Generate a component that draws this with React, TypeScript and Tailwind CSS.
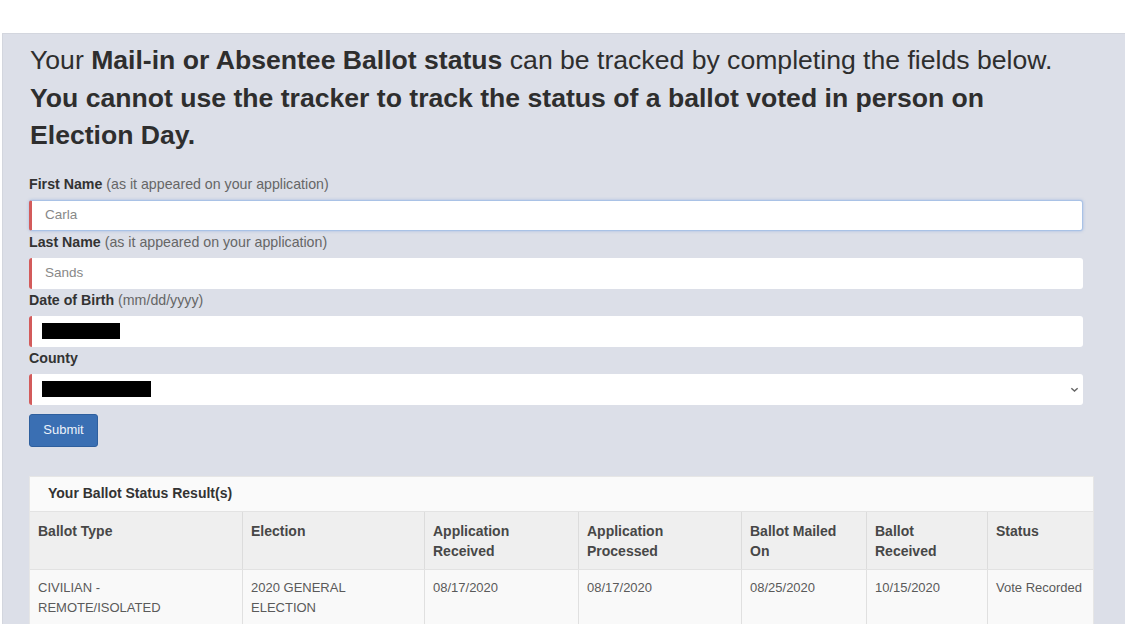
import React from 'react';

const font = { fontFamily: '"Liberation Sans", Arial, sans-serif' };

interface Field {
  label: string;
  hint?: string;
  value?: string;
  redact?: number;
  focus?: boolean;
  select?: boolean;
}

const fields: Field[] = [
  { label: 'First Name', hint: '(as it appeared on your application)', value: 'Carla', focus: true },
  { label: 'Last Name', hint: '(as it appeared on your application)', value: 'Sands' },
  { label: 'Date of Birth', hint: '(mm/dd/yyyy)', redact: 78 },
  { label: 'County', redact: 109, select: true },
];

const columns = [
  { title: ['Ballot Type'], value: ['CIVILIAN -', 'REMOTE/ISOLATED'], w: 'w-[212px]' },
  { title: ['Election'], value: ['2020 GENERAL', 'ELECTION'], w: 'w-[182px]' },
  { title: ['Application', 'Received'], value: ['08/17/2020'], w: 'w-[154px]' },
  { title: ['Application', 'Processed'], value: ['08/17/2020'], w: 'w-[163px]' },
  { title: ['Ballot Mailed', 'On'], value: ['08/25/2020'], w: 'w-[125px]' },
  { title: ['Ballot', 'Received'], value: ['10/15/2020'], w: 'w-[121px]' },
  { title: ['Status'], value: ['Vote Recorded'], w: 'flex-1' },
];

export default function App() {
  return (
    <div className="w-[1125px] h-[624px] overflow-hidden bg-white pt-[33px]" style={font}>
      <div className="h-full ml-[2px] bg-[#dcdfe8] border-t border-l border-[#d3d6de] pl-[26px] pr-[40px] pt-[8px]">
        {/* Intro */}
        <div className="ml-[1px] w-[1040px] text-[26.6px] leading-[37.5px] text-[#2e2e2e]">
          <p>
            Your <b>Mail-in or Absentee Ballot status</b> can be tracked by completing the fields below.
          </p>
          <p className="font-bold">
            You cannot use the tracker to track the status of a ballot voted in person on Election Day.
          </p>
        </div>

        {/* Form */}
        <div className="mt-[18px] w-[1054px]">
          {fields.map((f) => (
            <div key={f.label}>
              <div className="pt-[3px] pb-[8px] text-[14.2px] leading-[16px]">
                <span className="font-bold text-[#333]">{f.label}</span>
                {f.hint && <span className="text-[#666]"> {f.hint}</span>}
              </div>
              <div
                className={`h-[31px] bg-white rounded-[3px] border-l-[3px] border-l-[#d35b5b] flex items-center pl-[13px] pr-[4px] ${
                  f.focus ? 'border border-[#a9c2e6] shadow-[0_0_3px_rgba(102,150,220,0.5)]' : ''
                }`}
              >
                {f.value && <span className="text-[13.5px] text-[#888]">{f.value}</span>}
                {f.redact && <span className="ml-[-3px] h-[16px] bg-black" style={{ width: f.redact }} />}
                {f.select && (
                  <svg className="ml-auto" width="9" height="9" viewBox="0 0 10 10">
                    <path d="M1.5 3.5 L5 6.8 L8.5 3.5" fill="none" stroke="#666" strokeWidth="1.6" />
                  </svg>
                )}
              </div>
            </div>
          ))}

          <button className="mt-[9px] h-[33px] w-[69px] rounded-[3px] bg-[#3a6fb3] border border-[#2e5f9e] text-[#eef3fa] text-[13px]">
            Submit
          </button>
        </div>

        {/* Results */}
        <div className="mt-[29px] w-[1065px] bg-[#fafafa] border border-[#e6e6e6]">
          <div className="h-[35px] flex items-center pl-[18px] text-[14px] font-bold text-[#333] border-b border-[#e3e3e3]">
            Your Ballot Status Result(s)
          </div>
          <div className="flex bg-[#efefef] h-[57px]">
            {columns.map((c, i) => (
              <div
                key={i}
                className={`${c.w} px-[8px] pt-[9px] text-[14px] leading-[20px] font-bold text-[#474747] ${
                  i > 0 ? 'border-l border-[#dcdcdc]' : ''
                }`}
              >
                {c.title.map((t) => (
                  <div key={t}>{t}</div>
                ))}
              </div>
            ))}
          </div>
          <div className="flex bg-[#f9f9f9] h-[60px] border-t border-[#e2e2e2]">
            {columns.map((c, i) => (
              <div
                key={i}
                className={`${c.w} px-[8px] pt-[8px] text-[13px] leading-[20px] text-[#5a5a5a] whitespace-nowrap ${
                  i > 0 ? 'border-l border-[#e0e0e0]' : ''
                }`}
              >
                {c.value.map((t) => (
                  <div key={t}>{t}</div>
                ))}
              </div>
            ))}
          </div>
        </div>
      </div>
    </div>
  );
}
